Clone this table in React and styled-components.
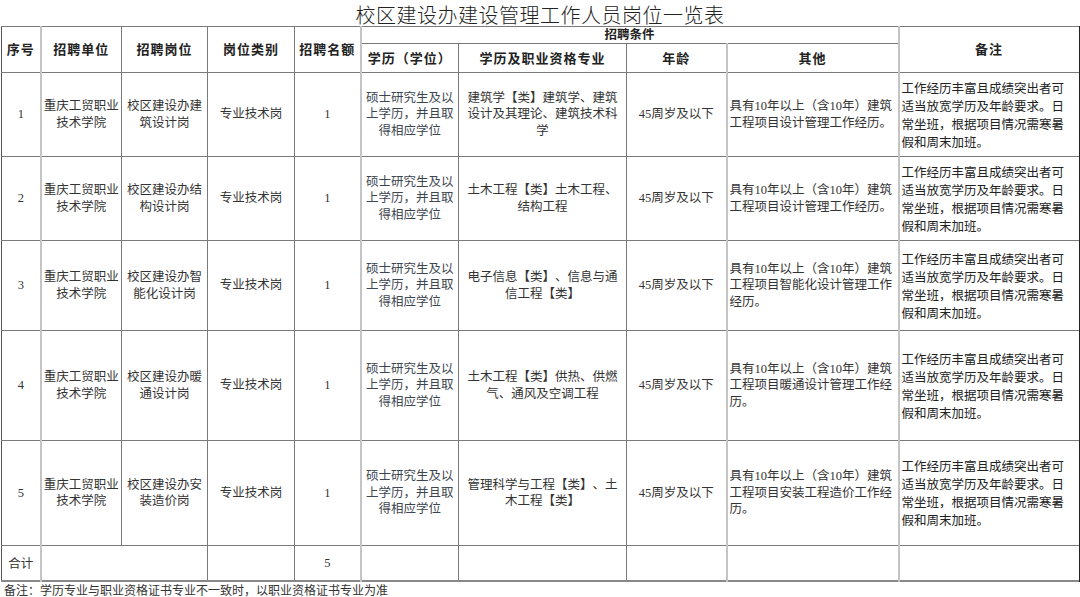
import React from 'react'
import styled, { createGlobalStyle } from 'styled-components'

const rows = [
  {
    no: 1,
    height: 84,
    post: ['校区建设办建', '筑设计岗'],
    major: ['建筑学【类】建筑学、建筑', '设计及其理论、建筑技术科', '学'],
    other: ['具有10年以上（含10年）建筑', '工程项目设计管理工作经历。'],
  },
  {
    no: 2,
    height: 84,
    post: ['校区建设办结', '构设计岗'],
    major: ['土木工程【类】土木工程、', '结构工程'],
    other: ['具有10年以上（含10年）建筑', '工程项目设计管理工作经历。'],
  },
  {
    no: 3,
    height: 90,
    post: ['校区建设办智', '能化设计岗'],
    major: ['电子信息【类】、信息与通', '信工程【类】'],
    other: ['具有10年以上（含10年）建筑', '工程项目智能化设计管理工作', '经历。'],
  },
  {
    no: 4,
    height: 110,
    post: ['校区建设办暖', '通设计岗'],
    major: ['土木工程【类】供热、供燃', '气、通风及空调工程'],
    other: ['具有10年以上（含10年）建筑', '工程项目暖通设计管理工作经', '历。'],
  },
  {
    no: 5,
    height: 105,
    post: ['校区建设办安', '装造价岗'],
    major: ['管理科学与工程【类】、土', '木工程【类】'],
    other: ['具有10年以上（含10年）建筑', '工程项目安装工程造价工作经', '历。'],
  },
]

const unit = ['重庆工贸职业', '技术学院']
const degree = ['硕士研究生及以', '上学历，并且取', '得相应学位']
const remark = ['工作经历丰富且成绩突出者可', '适当放宽学历及年龄要求。日', '常坐班，根据项目情况需寒暑', '假和周末加班。']

const widths = [39, 81, 86, 87, 66, 98, 168, 100, 172, 181]

const Lines = ({ items }) =>
  items.map((line, i) => (
    <React.Fragment key={i}>
      {i > 0 && <br />}
      {line}
    </React.Fragment>
  ))

export default function App() {
  return (
    <Page>
      <GlobalStyle />
      <Title>校区建设办建设管理工作人员岗位一览表</Title>
      <Sheet>
        <colgroup>
          {widths.map((w, i) => (
            <col key={i} style={{ width: w }} />
          ))}
        </colgroup>
        <thead>
          <tr style={{ height: 17 }}>
            <HeadCell rowSpan={2} $edge>序号</HeadCell>
            <HeadCell rowSpan={2} $light>招聘单位</HeadCell>
            <HeadCell rowSpan={2}>招聘岗位</HeadCell>
            <HeadCell rowSpan={2}>岗位类别</HeadCell>
            <HeadCell rowSpan={2}>招聘名额</HeadCell>
            <HeadCell colSpan={4} $light $small>招聘条件</HeadCell>
            <HeadCell rowSpan={2} $light $last>备注</HeadCell>
          </tr>
          <tr style={{ height: 29 }}>
            <HeadCell $light>学历（学位）</HeadCell>
            <HeadCell>学历及职业资格专业</HeadCell>
            <HeadCell>年龄</HeadCell>
            <HeadCell $light>其他</HeadCell>
          </tr>
        </thead>
        <tbody>
          {rows.map((r) => (
            <tr key={r.no} style={{ height: r.height }}>
              <Cell $edge>{r.no}</Cell>
              <Cell $light><Lines items={unit} /></Cell>
              <Cell><Lines items={r.post} /></Cell>
              <Cell>专业技术岗</Cell>
              <Cell>1</Cell>
              <Cell $light $tint><Lines items={degree} /></Cell>
              <Cell><Lines items={r.major} /></Cell>
              <Cell>45周岁及以下</Cell>
              <Cell $light $align="left"><Lines items={r.other} /></Cell>
              <NoteCell $light $last><Lines items={remark} /></NoteCell>
            </tr>
          ))}
          <tr style={{ height: 35 }}>
            <Cell $edge $sans>合计</Cell>
            <Cell $light colSpan={2} />
            <Cell />
            <Cell>5</Cell>
            <Cell $light />
            <Cell />
            <Cell />
            <Cell $light />
            <Cell $light $last />
          </tr>
        </tbody>
      </Sheet>
      <Footnote>备注：学历专业与职业资格证书专业不一致时，以职业资格证书专业为准</Footnote>
    </Page>
  )
}

// styles ===========
const GlobalStyle = createGlobalStyle`
  html, body {
    margin: 0;
    padding: 0;
    background: #fff;
  }
  body {
    font-family: "Liberation Serif", "Noto Sans CJK SC", serif;
    color: #333;
    text-spacing-trim: space-all;
  }
`

const Page = styled.div`
  width: 1080px;
  height: 597px;
  overflow: hidden;
  background: #fff;
`

const Title = styled.div`
  box-sizing: border-box;
  height: 26px;
  padding-top: 4px;
  line-height: 22px;
  text-align: center;
  font-family: "Noto Sans CJK SC", sans-serif;
  font-size: 20px;
  font-weight: 300;
  letter-spacing: 0.5px;
  color: #222;
`

const Sheet = styled.table`
  table-layout: fixed;
  width: 1078px;
  margin-left: 1px;
  border-collapse: collapse;
  border-top: 1px solid #777;
  border-bottom: 2px solid #888;
`

const cellBorders = ({ $light, $edge, $last }) => `
  border: 1px solid #7a7a7a;
  ${$light ? 'border-left: 2px solid #c4c4c4;' : ''}
  ${$edge ? 'border-left: 1px solid #555;' : ''}
  ${$last ? 'border-right: 2px solid #222;' : ''}
`

const HeadCell = styled.th`
  ${cellBorders};
  padding: 0;
  font-family: "Liberation Serif", "Noto Sans CJK SC", serif;
  font-size: ${({ $small }) => ($small ? '12.5px' : '13px')};
  line-height: 15px;
  font-weight: 700;
  color: #222;
  text-align: center;
  vertical-align: middle;
  letter-spacing: ${({ $small }) => ($small ? '0' : '1px')};
`

const Cell = styled.td`
  ${cellBorders};
  padding: 0 2px;
  font-family: ${({ $sans }) =>
    $sans ? '"Noto Sans CJK SC", sans-serif' : '"Liberation Serif", "Noto Sans CJK SC", serif'};
  font-size: 12.5px;
  line-height: 16.5px;
  color: ${({ $tint }) => ($tint ? '#3d4650' : '#333')};
  text-align: ${({ $align }) => $align || 'center'};
  vertical-align: middle;
  white-space: nowrap;
  overflow: hidden;
`

const NoteCell = styled.td`
  ${cellBorders};
  padding: 0 2px;
  font-family: "Noto Sans CJK SC", sans-serif;
  font-size: 12.5px;
  line-height: 18px;
  color: #222;
  text-align: left;
  vertical-align: middle;
  white-space: nowrap;
  overflow: hidden;
`

const Footnote = styled.div`
  padding: 1px 0 0 4px;
  font-family: "Noto Sans CJK SC", sans-serif;
  font-size: 12px;
  line-height: 13px;
  color: #333;
`
